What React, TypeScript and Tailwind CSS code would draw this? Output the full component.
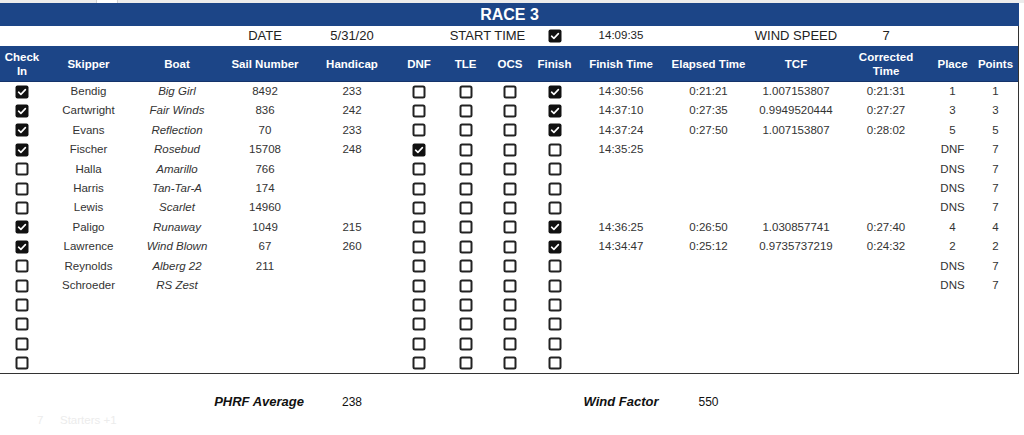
import React from 'react';

type Row = {
  checkIn: boolean;
  skipper?: string;
  boat?: string;
  sail?: string;
  handicap?: string;
  dnf?: boolean;
  finish?: boolean;
  finishTime?: string;
  elapsed?: string;
  tcf?: string;
  corrected?: string;
  place?: string;
  points?: string;
};

const rows: Row[] = [
  { checkIn: true, skipper: 'Bendig', boat: 'Big Girl', sail: '8492', handicap: '233', finish: true, finishTime: '14:30:56', elapsed: '0:21:21', tcf: '1.007153807', corrected: '0:21:31', place: '1', points: '1' },
  { checkIn: true, skipper: 'Cartwright', boat: 'Fair Winds', sail: '836', handicap: '242', finish: true, finishTime: '14:37:10', elapsed: '0:27:35', tcf: '0.9949520444', corrected: '0:27:27', place: '3', points: '3' },
  { checkIn: true, skipper: 'Evans', boat: 'Reflection', sail: '70', handicap: '233', finish: true, finishTime: '14:37:24', elapsed: '0:27:50', tcf: '1.007153807', corrected: '0:28:02', place: '5', points: '5' },
  { checkIn: true, skipper: 'Fischer', boat: 'Rosebud', sail: '15708', handicap: '248', dnf: true, finishTime: '14:35:25', place: 'DNF', points: '7' },
  { checkIn: false, skipper: 'Halla', boat: 'Amarillo', sail: '766', place: 'DNS', points: '7' },
  { checkIn: false, skipper: 'Harris', boat: 'Tan-Tar-A', sail: '174', place: 'DNS', points: '7' },
  { checkIn: false, skipper: 'Lewis', boat: 'Scarlet', sail: '14960', place: 'DNS', points: '7' },
  { checkIn: true, skipper: 'Paligo', boat: 'Runaway', sail: '1049', handicap: '215', finish: true, finishTime: '14:36:25', elapsed: '0:26:50', tcf: '1.030857741', corrected: '0:27:40', place: '4', points: '4' },
  { checkIn: true, skipper: 'Lawrence', boat: 'Wind Blown', sail: '67', handicap: '260', finish: true, finishTime: '14:34:47', elapsed: '0:25:12', tcf: '0.9735737219', corrected: '0:24:32', place: '2', points: '2' },
  { checkIn: false, skipper: 'Reynolds', boat: 'Alberg 22', sail: '211', place: 'DNS', points: '7' },
  { checkIn: false, skipper: 'Schroeder', boat: 'RS Zest', place: 'DNS', points: '7' },
  { checkIn: false },
  { checkIn: false },
  { checkIn: false },
  { checkIn: false },
];

const cols =
  'grid grid-cols-[44px_89px_88px_88px_86px_48px_45px_44px_45px_88px_87px_88px_92px_41px_45px]';

const Box = ({ checked }: { checked?: boolean }) =>
  checked ? (
    <svg width="14" height="14" viewBox="0 0 14 14" className="block">
      <rect x="0.5" y="0.5" width="13" height="13" rx="2" fill="#111" />
      <path d="M3.6 7.2 L5.9 9.4 L10.4 4.6" stroke="#fff" strokeWidth="1.6" fill="none" strokeLinecap="round" strokeLinejoin="round" />
    </svg>
  ) : (
    <svg width="14" height="14" viewBox="0 0 14 14" className="block">
      <rect x="1.5" y="1.5" width="11" height="11" rx="1.5" stroke="#222" strokeWidth="2" fill="#fff" />
    </svg>
  );

const Cell = ({ children, italic }: { children?: React.ReactNode; italic?: boolean }) => (
  <div className={`flex items-center justify-center whitespace-nowrap ${italic ? 'italic' : ''}`}>{children}</div>
);

export default function App() {
  return (
    <div className="h-[435px] w-[1024px] overflow-hidden bg-white font-['Liberation_Sans',Arial,sans-serif] text-[#333]">
      {/* sheet top edge */}
      <div className="flex h-[3px] bg-[#ececec]">
        <div className="w-[97px] border-r border-[#d0d0d0]" />
        <div className="w-[21px] border-r border-[#d0d0d0] bg-white" />
      </div>

      {/* title */}
      <div className="flex h-[23px] w-[1019px] items-center justify-center bg-[#1c4587] text-[16px] font-bold text-white">
        RACE 3
      </div>

      <div className="w-[1019px] border-r border-b border-[#333]">
        {/* info row */}
        <div className={`${cols} h-[20px] text-[13px] text-[#222]`}>
          <div className="col-start-4 flex items-center justify-center">DATE</div>
          <div className="flex items-center justify-center">5/31/20</div>
          <div className="col-span-2 col-start-7 flex items-center justify-center">START TIME</div>
          <Cell><Box checked /></Cell>
          <div className="flex items-center justify-center text-[11.5px]">14:09:35</div>
          <div className="col-start-12 flex items-center justify-center">WIND SPEED</div>
          <div className="flex items-center justify-center">7</div>
        </div>

        {/* header */}
        <div className={`${cols} h-[36px] border-b border-[#15336a] bg-[#1c4587] text-[11.5px] font-bold leading-[14px] text-white`}>
          <Cell><span className="text-center">Check<br />In</span></Cell>
          <Cell>Skipper</Cell>
          <Cell>Boat</Cell>
          <Cell>Sail Number</Cell>
          <Cell>Handicap</Cell>
          <Cell>DNF</Cell>
          <Cell>TLE</Cell>
          <Cell>OCS</Cell>
          <Cell>Finish</Cell>
          <Cell>Finish Time</Cell>
          <Cell>Elapsed Time</Cell>
          <Cell>TCF</Cell>
          <Cell><span className="text-center">Corrected<br />Time</span></Cell>
          <Cell>Place</Cell>
          <Cell>Points</Cell>
        </div>

        {/* entries */}
        {rows.map((r, i) => (
          <div key={i} className={`${cols} h-[19.4px] text-[11.5px]`}>
            <Cell><Box checked={r.checkIn} /></Cell>
            <Cell>{r.skipper}</Cell>
            <Cell italic>{r.boat}</Cell>
            <Cell>{r.sail}</Cell>
            <Cell>{r.handicap}</Cell>
            <Cell><Box checked={r.dnf} /></Cell>
            <Cell><Box /></Cell>
            <Cell><Box /></Cell>
            <Cell><Box checked={r.finish} /></Cell>
            <Cell>{r.finishTime}</Cell>
            <Cell>{r.elapsed}</Cell>
            <Cell>{r.tcf}</Cell>
            <Cell>{r.corrected}</Cell>
            <Cell>{r.place}</Cell>
            <Cell>{r.points}</Cell>
          </div>
        ))}
      </div>

      {/* totals */}
      <div className={`${cols} mt-[18px] h-[20px] text-[12px] text-[#111]`}>
        <div className="col-span-2 col-start-3 flex items-center justify-end pr-[5px] text-[13px] font-bold italic">PHRF Average</div>
        <Cell>238</Cell>
        <div className="col-start-10 flex items-center justify-center text-[13px] font-bold italic">Wind Factor</div>
        <Cell>550</Cell>
      </div>

      {/* faint row below */}
      <div className="mt-[1px] flex h-[16px] items-center text-[11.5px] text-[#ececec]">
        <span className="w-[60px] pl-[37px]">7</span>
        <span>Starters +1</span>
      </div>
    </div>
  );
}
